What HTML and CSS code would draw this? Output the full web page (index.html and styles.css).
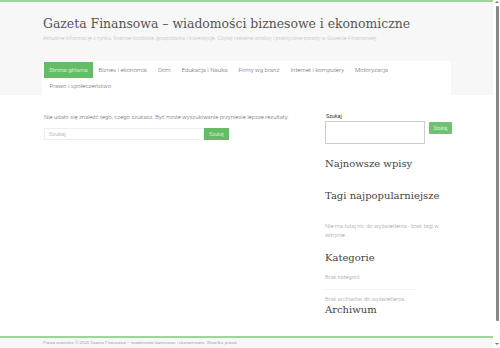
FILE: index.html
```html
<!DOCTYPE html>
<html>
<head>
<title>Gazeta Finansowa</title>
<link rel="stylesheet" href="styles.css">
</head>
<body>
<div class="frame">
	<div class="page">
		<header class="site-head">
			<div class="brand">
				<h1 class="site-title">Gazeta Finansowa – wiadomości biznesowe i ekonomiczne</h1>
				<p class="tagline">Aktualne informacje z rynku, finanse osobiste, gospodarka i inwestycje. Czytaj rzetelne analizy i praktyczne porady w Gazecie Finansowej.</p>
			</div>
			<nav class="menu">
				<a class="menu-item active" href="#">Strona główna</a>
				<a class="menu-item" href="#">Biznes i ekonomia</a>
				<a class="menu-item" href="#">Dom</a>
				<a class="menu-item" href="#">Edukacja i Nauka</a>
				<a class="menu-item" href="#">Firmy wg branż</a>
				<a class="menu-item" href="#">Internet i komputery</a>
				<a class="menu-item" href="#">Motoryzacja</a>
				<a class="menu-item" href="#">Prawo i społeczeństwo</a>
			</nav>
		</header>
		<main class="main">
			<section class="content">
				<p class="notice">Nie udało się znaleźć tego, czego szukasz. Być może wyszukiwanie przyniesie lepsze rezultaty.</p>
				<form class="search">
					<input class="search-field" type="text" placeholder="Szukaj">
					<button class="search-btn" type="button">Szukaj</button>
				</form>
			</section>
			<aside class="sidebar">
				<div class="widget side-search">
					<label class="side-label">Szukaj</label>
					<div class="side-row">
						<input class="side-field" type="text">
						<button class="side-btn" type="button">Szukaj</button>
					</div>
				</div>
				<h2 class="widget-title w-recent">Najnowsze wpisy</h2>
				<h2 class="widget-title w-tags">Tagi najpopularniejsze</h2>
				<p class="widget-text tags-empty">Nie ma tutaj nic do wyświetlenia - brak tagi w witrynie.</p>
				<h2 class="widget-title w-cat">Kategorie</h2>
				<p class="widget-text cat-empty">Brak kategorii</p>
				<p class="widget-text arch-empty">Brak archiwów do wyświetlenia.</p>
				<h2 class="widget-title w-arch">Archiwum</h2>
			</aside>
		</main>
		<footer class="site-foot">
			<p>Prawa autorskie © 2025 Gazeta Finansowa – wiadomości biznesowe i ekonomiczne. Wszelkie prawa</p>
		</footer>
	</div>
	<div class="scrollbar">
		<span class="arrow up"></span>
		<span class="thumb"></span>
		<span class="arrow down"></span>
	</div>
</div>
</body>
</html>
```
FILE: styles.css
```css
*{
	box-sizing:border-box;
}
body{
	margin:0;
	font-family:Roboto, "Open Sans", sans-serif;
	font-weight:300;
	background:#fff;
	overflow:hidden;
}
.frame{
	display:flex;
	width:500px;
	height:348px;
}
.page{
	width:493px;
	display:flex;
	flex-direction:column;
}
.site-head{
	background:#f7f7f7;
	border-top:2px solid #9dd59a;
	padding:12px 0 0 42px;
}
.site-title{
	font-family:"DejaVu Serif", serif;
	font-stretch:condensed;
	font-weight:normal;
	font-size:13.8px;
	color:#555;
	margin:0 0 0 1px;
	line-height:18px;
}
.tagline{
	margin:2px 0 0 1px;
	font-size:5.6px;
	color:#bdbdbd;
	line-height:8px;
}
.menu{
	margin-top:19px;
	width:409px;
	background:#fff;
	display:flex;
	flex-wrap:wrap;
	padding:1px 0 0 2px;
	height:34px;
	align-content:flex-start;
}
.menu-item{
	font-size:6.1px;
	color:#666;
	text-decoration:none;
	white-space:nowrap;
	height:16px;
	line-height:16px;
	padding:0 5.5px;
}
.menu-item.active{
	background:#64bc64;
	color:#fff;
	width:49px;
	padding:0;
	text-align:center;
}
.main{
	flex:1;
	display:flex;
	background:#fff;
	padding-left:44px;
}
.content{
	width:281px;
	padding-top:17px;
}
.notice{
	margin:0;
	font-size:5.95px;
	color:#666;
	line-height:9px;
}
.search{
	display:flex;
	margin-top:7px;
}
.search-field{
	width:160px;
	height:12px;
	border:1px solid #eee;
	font-family:Roboto, sans-serif;
	font-weight:300;
	font-size:5.8px;
	padding:0 4px;
	color:#999;
}
.search-field::placeholder{
	color:#999;
}
.search-btn{
	width:25px;
	height:12px;
	border:0;
	background:#64bc64;
	color:#fff;
	font-size:5px;
	padding:0;
	font-family:Roboto, sans-serif;
	font-weight:300;
}
.sidebar{
	width:130px;
	padding-top:18px;
}
.side-label{
	display:block;
	font-size:5.4px;
	font-weight:400;
	color:#333;
	line-height:7px;
	margin-left:1px;
}
.side-row{
	display:flex;
	align-items:flex-start;
	gap:4px;
	margin-top:1px;
}
.side-field{
	width:100px;
	height:23px;
	border:1px solid #ccc;
}
.side-btn{
	width:23px;
	height:12px;
	border:0;
	border-radius:1px;
	background:#70c170;
	color:#e0f3e0;
	font-size:4.6px;
	padding:0;
	margin-top:1px;
	font-family:Roboto, sans-serif;
}
.widget-title{
	font-family:"DejaVu Serif", serif;
	font-weight:normal;
	font-size:10px;
	color:#444;
	margin:0;
	line-height:14px;
}
.w-recent{
	margin-top:13px;
}
.w-tags{
	margin-top:18px;
}
.widget-text{
	font-size:5.8px;
	color:#999;
	line-height:9px;
	margin:0;
	width:120px;
}
.tags-empty{
	margin-top:19px;
}
.w-cat{
	margin-top:11px;
}
.cat-empty{
	margin-top:8px;
	padding-bottom:7px;
	border-bottom:1px solid #f3f3f3;
	width:90px;
}
.arch-empty{
	margin-top:6px;
	line-height:7px;
}
.w-arch{
	margin-top:0;
}
.site-foot{
	height:12px;
	border-top:2px solid #9dd59a;
	background:#f7f7f7;
	padding-left:43px;
}
.site-foot p{
	margin:0;
	font-size:4.4px;
	color:#888;
	line-height:10px;
}
.scrollbar{
	width:7px;
	background:#fff;
	display:flex;
	flex-direction:column;
	align-items:center;
}
.thumb{
	width:3px;
	flex:1;
	background:#888;
	border-radius:1px;
	margin:3px 0 22px 1px;
}
.arrow{
	width:0;
	height:0;
	border-left:2px solid transparent;
	border-right:2px solid transparent;
}
.arrow.up{
	border-bottom:2px solid #777;
	margin-top:1px;
}
.arrow.down{
	border-top:2px solid #777;
	margin-bottom:3px;
}
```
